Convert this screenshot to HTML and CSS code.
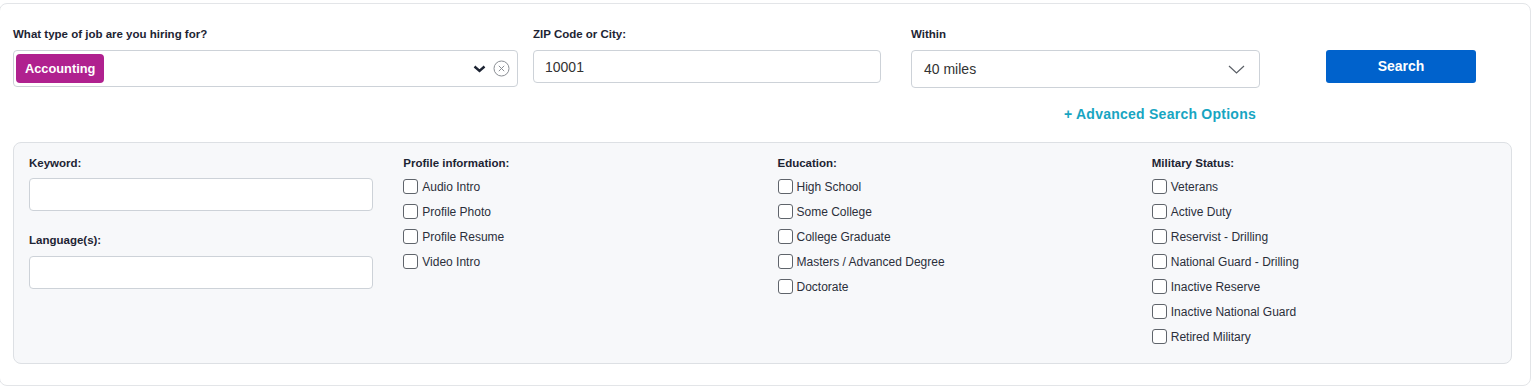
FILE: index.html
```html
<!DOCTYPE html>
<html lang="en">

<head>
    <meta charset="UTF-8">
    <meta name="viewport" content="width=device-width, initial-scale=1.0">
    <title>Candidate Search</title>
    <link rel="stylesheet" href="styles.css">
</head>

<body>
    <div class="search-card">
        <div class="search-row">
            <div class="field field-job">
                <label class="field-label">What type of job are you hiring for?</label>
                <div class="job-select">
                    <span class="tag">Accounting</span>
                    <span class="job-icons">
                        <svg class="chevron-bold" width="13" height="8" viewBox="0 0 13 8">
                            <path d="M1.5 1.5 L6.5 6 L11.5 1.5" fill="none" stroke="#1d2433" stroke-width="2.4" />
                        </svg>
                        <svg class="clear-icon" width="17" height="17" viewBox="0 0 17 17">
                            <circle cx="8.5" cy="8.5" r="7.5" fill="none" stroke="#8a8e94" stroke-width="1" />
                            <path d="M5.8 5.8 L11.2 11.2 M11.2 5.8 L5.8 11.2" stroke="#8a8e94" stroke-width="1" />
                        </svg>
                    </span>
                </div>
            </div>
            <div class="field field-zip">
                <label class="field-label">ZIP Code or City:</label>
                <input class="text-input zip-input" type="text" value="10001">
            </div>
            <div class="field field-within">
                <label class="field-label">Within</label>
                <div class="within-select">
                    <span>40 miles</span>
                    <svg width="17" height="9" viewBox="0 0 17 9">
                        <path d="M1 1 L8.5 8 L16 1" fill="none" stroke="#5a5f66" stroke-width="1.2" />
                    </svg>
                </div>
            </div>
            <button class="search-btn">Search</button>
        </div>

        <div class="advanced-row">
            <a class="advanced-link" href="#">+ Advanced Search Options</a>
        </div>

        <div class="advanced-panel">
            <div class="panel-col">
                <div class="panel-label">Keyword:</div>
                <input class="text-input panel-input" type="text">
                <div class="panel-label lang-label">Language(s):</div>
                <input class="text-input panel-input" type="text">
            </div>

            <div class="panel-col">
                <div class="panel-label">Profile information:</div>
                <div class="check-list">
                    <label class="check-row"><input type="checkbox"><span>Audio Intro</span></label>
                    <label class="check-row"><input type="checkbox"><span>Profile Photo</span></label>
                    <label class="check-row"><input type="checkbox"><span>Profile Resume</span></label>
                    <label class="check-row"><input type="checkbox"><span>Video Intro</span></label>
                </div>
            </div>

            <div class="panel-col">
                <div class="panel-label">Education:</div>
                <div class="check-list">
                    <label class="check-row"><input type="checkbox"><span>High School</span></label>
                    <label class="check-row"><input type="checkbox"><span>Some College</span></label>
                    <label class="check-row"><input type="checkbox"><span>College Graduate</span></label>
                    <label class="check-row"><input type="checkbox"><span>Masters / Advanced Degree</span></label>
                    <label class="check-row"><input type="checkbox"><span>Doctorate</span></label>
                </div>
            </div>

            <div class="panel-col">
                <div class="panel-label">Military Status:</div>
                <div class="check-list">
                    <label class="check-row"><input type="checkbox"><span>Veterans</span></label>
                    <label class="check-row"><input type="checkbox"><span>Active Duty</span></label>
                    <label class="check-row"><input type="checkbox"><span>Reservist - Drilling</span></label>
                    <label class="check-row"><input type="checkbox"><span>National Guard - Drilling</span></label>
                    <label class="check-row"><input type="checkbox"><span>Inactive Reserve</span></label>
                    <label class="check-row"><input type="checkbox"><span>Inactive National Guard</span></label>
                    <label class="check-row"><input type="checkbox"><span>Retired Military</span></label>
                </div>
            </div>
        </div>
    </div>
</body>

</html>
```

FILE: styles.css
```css
* {
    margin: 0;
    padding: 0;
    box-sizing: border-box;
}

body {
    background: #ffffff;
    font-family: "Liberation Sans", Arial, sans-serif;
    color: #1d2433;
}

.search-card {
    margin: 3px 1px 0 -1px;
    padding: 22px 18px 21px 13px;
    border: 1px solid #e3e5e8;
    border-radius: 8px;
}

/* top search row */
.search-row {
    display: flex;
    align-items: flex-start;
}

.field {
    display: flex;
    flex-direction: column;
}

.field-job {
    width: 505px;
    margin-right: 15px;
}

.field-zip {
    width: 348px;
    margin-right: 30px;
}

.field-within {
    width: 349px;
    margin-right: 66px;
}

.field-label,
.panel-label {
    font-size: 11.5px;
    font-weight: bold;
    line-height: 16px;
    color: #1d2433;
}

.field-label {
    margin-bottom: 8px;
}

.text-input {
    height: 33px;
    border: 1px solid #cdd2d8;
    border-radius: 4px;
    background: #fff;
    font-family: inherit;
    font-size: 14px;
    color: #333;
    outline: none;
}

.zip-input {
    padding-left: 11px;
}

.job-select {
    height: 37px;
    border: 1px solid #cdd2d8;
    border-radius: 4px;
    padding: 3px 7px 3px 2px;
    display: flex;
    align-items: center;
    justify-content: space-between;
}

.tag {
    height: 29px;
    line-height: 29px;
    padding: 0 9px;
    border-radius: 4px;
    background: #b0218f;
    color: #fff;
    font-size: 12.8px;
    font-weight: bold;
}

.job-icons {
    display: flex;
    align-items: center;
    gap: 7px;
}

.job-icons svg {
    display: block;
}

.within-select {
    height: 38px;
    border: 1px solid #cdd2d8;
    border-radius: 4px;
    padding: 0 14px 0 12px;
    display: flex;
    align-items: center;
    justify-content: space-between;
    font-size: 14px;
    color: #333;
}

.within-select svg {
    display: block;
}

.search-btn {
    width: 150px;
    height: 33px;
    margin-top: 24px;
    padding-bottom: 2px;
    border: none;
    border-radius: 3px;
    background: #0062cc;
    color: #fff;
    font-family: inherit;
    font-size: 14px;
    font-weight: bold;
}

/* advanced link */
.advanced-row {
    width: 1247px;
    margin-top: 16px;
    padding-right: 4px;
    display: flex;
    justify-content: flex-end;
}

.advanced-link {
    font-size: 14px;
    line-height: 20px;
    font-weight: bold;
    letter-spacing: 0.25px;
    color: #17a5c2;
    text-decoration: none;
}

/* advanced options panel */
.advanced-panel {
    margin-top: 18px;
    padding: 12px 15px 14px;
    display: grid;
    grid-template-columns: repeat(4, 1fr);
    column-gap: 30px;
    background: #f7f8fa;
    border: 1px solid #dde0e4;
    border-radius: 8px;
}

.panel-col {
    display: flex;
    flex-direction: column;
}

.panel-input {
    width: 344px;
    margin-top: 7px;
}

.lang-label {
    margin-top: 21px;
}

.lang-label + .panel-input {
    margin-top: 8px;
}

.check-list {
    margin-top: 3px;
    display: flex;
    flex-direction: column;
}

.check-row {
    height: 25px;
    display: flex;
    align-items: center;
    font-size: 12px;
    color: #2b2f3a;
}

.check-row input {
    appearance: none;
    width: 15px;
    height: 15px;
    margin-right: 4px;
    border: 1px solid #5f646b;
    border-radius: 3px;
    background: #fff;
}
```
